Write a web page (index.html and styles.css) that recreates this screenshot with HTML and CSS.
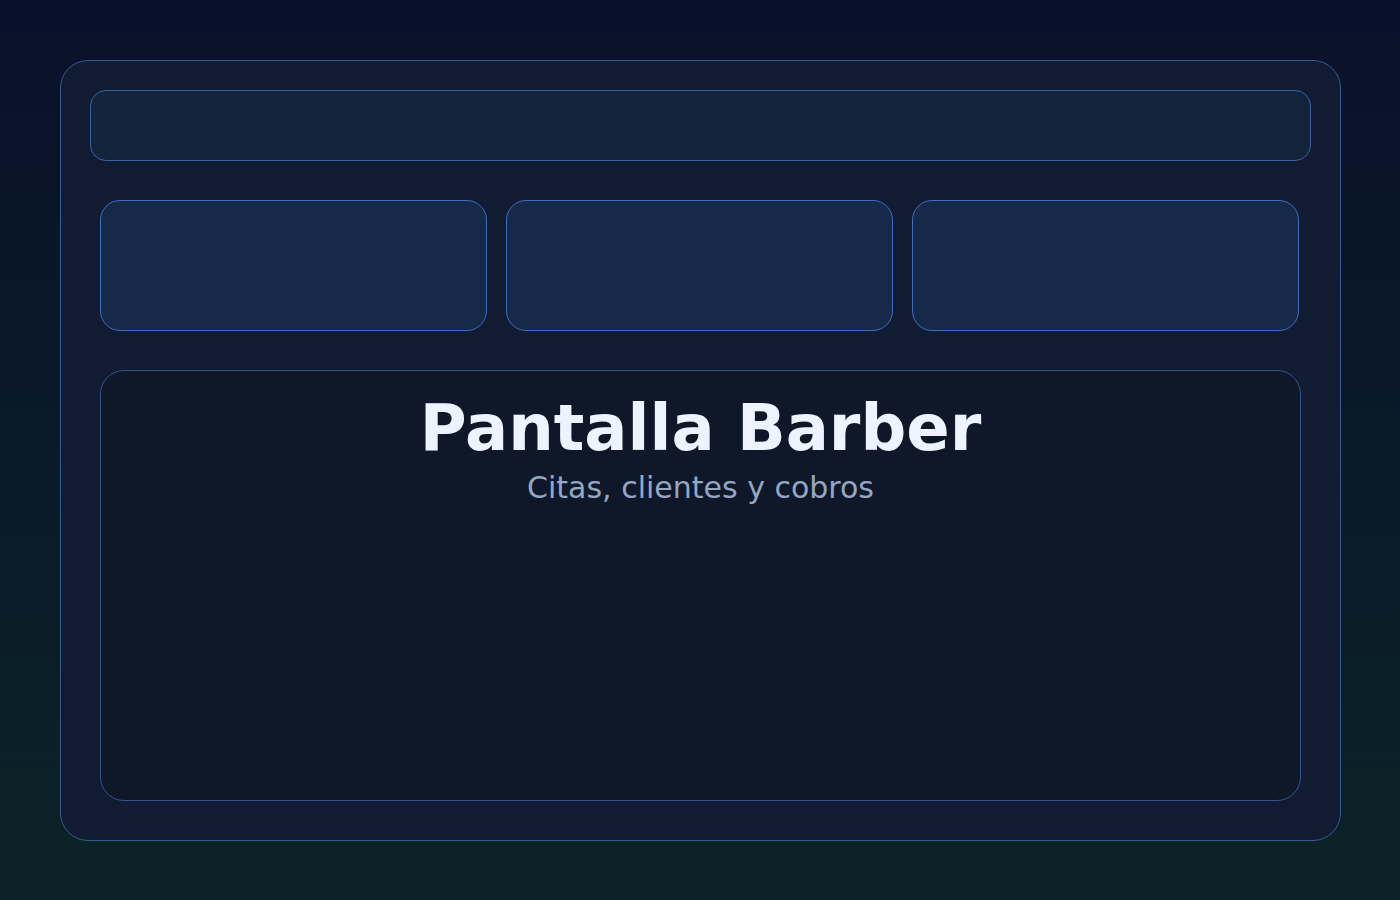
FILE: index.html
```html
<!DOCTYPE html>
<html lang="es">
<head>
    <meta charset="UTF-8" />
    <meta name="viewport" content="width=device-width, initial-scale=1" />
    <title>Pantalla Barber</title>
    <link rel="stylesheet" href="styles.css">
</head>
<body>

    <div class="pantalla">
        <!-- Barra superior -->
        <div class="barra"></div>

        <!-- Tarjetas -->
        <div class="tarjetas">
            <div class="tarjeta"></div>
            <div class="tarjeta"></div>
            <div class="tarjeta"></div>
        </div>

        <!-- Panel principal -->
        <div class="panel">
            <h1>Pantalla Barber</h1>
            <p class="subtitulo">Citas, clientes y cobros</p>
        </div>
    </div>

</body>
</html>
```

FILE: styles.css
```css
* {
    margin: 0;
    padding: 0;
    box-sizing: border-box;
}
body {
    font-family: 'DejaVu Sans', sans-serif;
    background: linear-gradient(to bottom, #09112a, #0b2327);
    min-height: 100vh;
    padding: 60px;
}
.pantalla {
    width: 1281px;
    height: 781px;
    padding: 29px 29px;
    background-color: #111b31;
    border: 1.5px solid #3a5a93;
    border-radius: 28px;
}
.barra {
    width: 1221px;
    height: 71px;
    background-color: #14233c;
    border: 1px solid #3a5fa3;
    border-radius: 16px;
}
.tarjetas {
    display: grid;
    grid-template-columns: repeat(3, 387px);
    gap: 19px;
    margin: 39px 10px 0;
}
.tarjeta {
    height: 131px;
    background-color: #172949;
    border: 1px solid #3f6cc0;
    border-radius: 20px;
}
.panel {
    width: 1201px;
    height: 431px;
    margin: 39px 10px 0;
    padding-top: 20px;
    text-align: center;
    background-color: #0e1829;
    border: 1px solid #34528a;
    border-radius: 24px;
}
h1 {
    font-size: 64px;
    font-weight: 700;
    line-height: 74px;
    color: #eef4ff;
}
.subtitulo {
    margin-top: 5px;
    font-size: 30px;
    line-height: 36px;
    color: #94a6c2;
}
```
